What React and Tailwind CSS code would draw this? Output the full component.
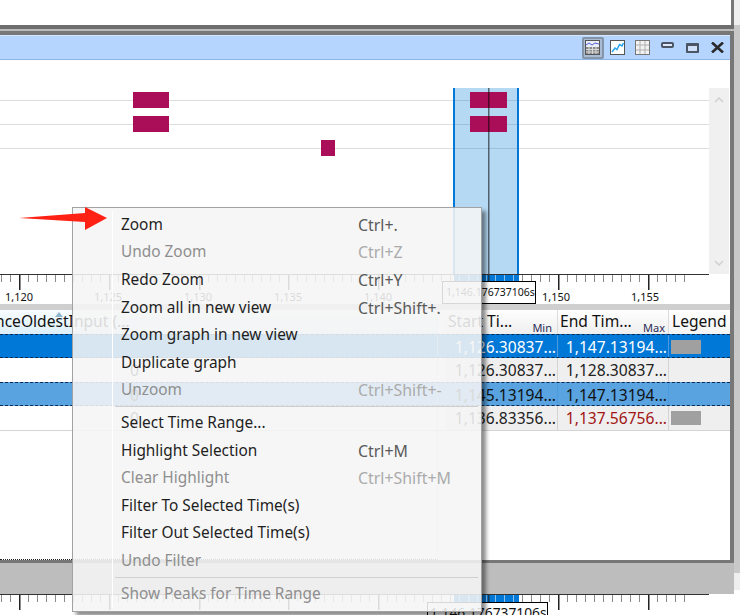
const FONT = { fontFamily: '"Noto Sans", "Open Sans", sans-serif' };

const menuItems = [
  { label: 'Zoom', keys: 'Ctrl+.' },
  { label: 'Undo Zoom', keys: 'Ctrl+Z', off: true },
  { label: 'Redo Zoom', keys: 'Ctrl+Y' },
  { label: 'Zoom all in new view', keys: 'Ctrl+Shift+.' },
  { label: 'Zoom graph in new view' },
  { label: 'Duplicate graph' },
  { label: 'Unzoom', keys: 'Ctrl+Shift+-', off: true },
  { sep: true },
  { label: 'Select Time Range...' },
  { label: 'Highlight Selection', keys: 'Ctrl+M' },
  { label: 'Clear Highlight', keys: 'Ctrl+Shift+M', off: true },
  { label: 'Filter To Selected Time(s)' },
  { label: 'Filter Out Selected Time(s)' },
  { label: 'Undo Filter', off: true },
  { sep: true },
  { label: 'Show Peaks for Time Range', off: true },
];

const rows = [
  { start: '1,126.30837...', end: '1,147.13194...', zero: '', legend: true, kind: 'selected' },
  { start: '1,126.30837...', end: '1,128.30837...', zero: '0', kind: 'plain' },
  { start: '1,145.13194...', end: '1,147.13194...', zero: '0', kind: 'focus' },
  { start: '1,136.83356...', end: '1,137.56756...', zero: '0', legend: true, kind: 'plain', red: true },
];

const ticks = Array.from({ length: 77 }, (_, i) => i);
const labels = [
  ['1,120', 19],
  ['1,125', 108],
  ['1,130', 198],
  ['1,135', 288],
  ['1,140', 378],
  ['1,150', 556],
  ['1,155', 645],
];

function Ruler({ showLabels, height }) {
  return (
    <svg width="730" height={height} className="block">
      <rect x="0" y="0" width="709" height="1" fill="#333" />
      <rect x="454" y="1" width="65" height="7" fill="#0078d7" />
      {ticks.map((i) => {
        const x = Math.round(19 + (i - 2) * 8.98);
        const major = (i - 2) % 10 === 0;
        const inSel = x > 454 && x < 519;
        if (x < 0 || x > 708) return null;
        return (
          <rect
            key={i}
            x={x}
            y="1"
            width={major ? 1.5 : 1}
            height={major && !inSel ? 15 : 7}
            fill={inSel ? '#8fc3ec' : major ? '#222' : '#8a8a8a'}
          />
        );
      })}
      <rect x="488" y="1" width="1.5" height="7" fill="#1c3a52" />
      {showLabels &&
        labels.map(([text, x]) => (
          <text key={text} x={x} y="27" textAnchor="middle" fontSize="11" fill="#111" style={FONT}>
            {text}
          </text>
        ))}
    </svg>
  );
}

function Plot() {
  return (
    <svg width="730" height="214" className="block">
      {[40, 64, 88].map((y) => (
        <rect key={y} x="0" y={y} width="709" height="1" fill="#dddddd" />
      ))}
      <rect x="133" y="32" width="36" height="16" fill="#ab0e58" />
      <rect x="133" y="56" width="36" height="16" fill="#ab0e58" />
      <rect x="321" y="80" width="14" height="16" fill="#ab0e58" />
      <rect x="453" y="28" width="66" height="186" fill="#0078d7" fillOpacity="0.29" />
      <rect x="470" y="32" width="37" height="16" fill="#ab0e58" />
      <rect x="470" y="56" width="37" height="16" fill="#ab0e58" />
      <rect x="453" y="28" width="2" height="186" fill="#0078d7" />
      <rect x="517" y="28" width="2" height="186" fill="#0078d7" />
      <rect x="488" y="28" width="1.5" height="186" fill="#000" fillOpacity="0.55" />
      <rect x="709" y="28" width="20" height="186" fill="#f0f0f0" />
      <path d="M715 103l4-4 4 4" transform="translate(0 -61)" fill="none" stroke="#d0d0d0" strokeWidth="1.5" />
      <path d="M715 199l4 4 4-4" transform="translate(0 2)" fill="none" stroke="#d0d0d0" strokeWidth="1.5" />
    </svg>
  );
}

function ChartTableIcon() {
  return (
    <svg width="15" height="15" viewBox="0 0 15 15">
      <rect x="0.5" y="0.5" width="14" height="14" fill="#e8eef8" stroke="#555" />
      <path d="M1 5l3-2 3 2 3-2 4 1" fill="none" stroke="#5a5ad0" />
      <rect x="1" y="7" width="13" height="7" fill="#8a8a8a" />
      <path d="M1 9.5h13M1 12h13M4 7v7M7.5 7v7M11 7v7" stroke="#d8d8d8" />
    </svg>
  );
}

function LineIcon() {
  return (
    <svg width="15" height="15" viewBox="0 0 15 15">
      <rect x="0.5" y="0.5" width="14" height="14" fill="#fff" stroke="#555" />
      <path d="M2 12l3-4 2 1.5 2.5-5L12 6l1.5-3" fill="none" stroke="#27a4ec" strokeWidth="1.5" />
    </svg>
  );
}

function GridIcon() {
  return (
    <svg width="15" height="15" viewBox="0 0 15 15">
      <rect x="0.5" y="0.5" width="14" height="14" fill="#f2f2f2" stroke="#777" />
      <path d="M1 5h13M1 10h13M5 1v13M10 1v13" stroke="#b0b0b0" />
    </svg>
  );
}

function TitleBar() {
  return (
    <div className="h-[25px] flex justify-end items-center bg-[#b5d5ff] border-t border-[#d5e6fd] border-b border-b-[#8fb4e6]">
      <div className="w-[25px] flex justify-center">
        <div className="w-[22px] h-[22px] flex items-center justify-center bg-[#a9bcd6] border-2 border-[#8595a8] rounded-[2px]">
          <ChartTableIcon />
        </div>
      </div>
      <div className="w-[25px] flex justify-center">
        <LineIcon />
      </div>
      <div className="w-[25px] flex justify-center">
        <GridIcon />
      </div>
      <div className="w-[25px] flex justify-center pb-[5px]">
        <div className="w-[13px] h-[6px] border-2 border-[#4b5563] rounded-[2px] bg-[#dbe8fb]" />
      </div>
      <div className="w-[25px] flex justify-center">
        <div className="w-[13px] h-[10px] border-2 border-t-[3px] border-[#4b5563] rounded-[1px] bg-[#cfe0f8]" />
      </div>
      <div className="w-[25px] flex justify-center">
        <svg width="13" height="11" viewBox="0 0 13 11">
          <path d="M1 0.5l11 10M12 0.5l-11 10" stroke="#2b2b2b" strokeWidth="2.6" />
        </svg>
      </div>
    </div>
  );
}

function TableRow({ row }) {
  const selected = row.kind === 'selected';
  const focus = row.kind === 'focus';
  const tone = selected ? 'bg-[#0078d7] text-white' : focus ? 'bg-[#58a3e0] text-[#111]' : 'text-[#222]';
  const side = selected || focus ? '' : 'bg-[#efefef]';
  const divider = selected || focus ? 'border-[#4a9be0]' : 'border-[#d4d4d4]';
  return (
    <div
      className={`h-[24px] flex items-center text-[15.6px] leading-[24px] ${tone} ${
        selected || focus ? 'border-y border-dashed border-[#0b2a52]' : ''
      }`}
    >
      <div className="w-[438px] h-full border-r border-dotted border-[#c8c8c8] pl-[130px]">{row.zero}</div>
      <div className="w-[7px] h-full" />
      <div className={`w-[113px] h-full border-r text-right pr-[1px] whitespace-nowrap ${side} ${divider}`}>{row.start}</div>
      <div className={`w-[111px] h-full border-r text-right pr-[1px] whitespace-nowrap ${side} ${divider}`}>
        <span className={row.red ? 'text-[#a31515]' : ''}>{row.end}</span>
      </div>
      <div className={`flex-1 h-full pl-[2px] pt-[5px] ${side}`}>
        {row.legend && <div className="w-[30px] h-[14px] bg-[#a0a0a0]" />}
      </div>
    </div>
  );
}

function Table() {
  return (
    <div className="h-[250px] flex flex-col bg-white">
      <div className="h-[24px] flex items-stretch text-[15.6px] leading-[22px] text-[#111]">
        <div className="relative w-[438px] overflow-hidden whitespace-nowrap bg-gradient-to-b from-[#f8fcff] to-[#dcefFA] border-r border-dotted border-[#c8c8c8]">
          <span className="block -ml-[5px]">nceOldestInput (...</span>
          <div className="absolute left-[55px] top-[2px] w-0 h-0 border-x-[4px] border-x-transparent border-b-[5px] border-b-[#8fb4cc]" />
        </div>
        <div className="w-[7px]" />
        <div className="relative w-[113px] bg-gradient-to-b from-white to-[#eeeeee] border-r border-[#dddddd] pl-[3px]">
          Start Ti...
          <span className="absolute right-[5px] bottom-[-1px] text-[11px] leading-[14px] text-[#2b2b55]">Min</span>
        </div>
        <div className="relative w-[111px] bg-gradient-to-b from-white to-[#eeeeee] border-r border-[#dddddd] pl-[2px]">
          End Tim...
          <span className="absolute right-[3px] bottom-[-1px] text-[11px] leading-[14px] text-[#2b2b55]">Max</span>
        </div>
        <div className="flex-1 pl-[3px] bg-gradient-to-b from-white to-[#f4f4f4]">Legend</div>
      </div>
      {rows.map((row, i) => (
        <TableRow key={i} row={row} />
      ))}
      <div className="flex-1 flex border-t border-[#d4d4d4]">
        <div className="w-[438px] h-[129px] border-r border-dotted border-[#c8c8c8] border-b border-b-[#222]" style={{ borderBottomStyle: 'dotted' }} />
      </div>
    </div>
  );
}

function ContextMenu() {
  return (
    <div className="absolute left-[72px] top-[207px] w-[410px] h-[405px] pt-[3px] bg-[rgba(245,245,245,0.88)] border border-[#a2a2a2] shadow-[4px_4px_4px_rgba(0,0,0,0.45)] text-[15.4px] leading-[20px]">
      <div className="absolute left-[39px] top-[3px] bottom-[3px] w-px bg-white" />
      {menuItems.map((item, i) =>
        item.sep ? (
          <div key={i} className="h-[5px] pl-[42px] pr-[3px] flex items-start">
            <div className="w-full h-px mt-[2px] bg-[#cfcfcf]" />
          </div>
        ) : (
          <div key={i} className={`h-[27.6px] flex items-center pl-[48px] ${item.off ? 'text-[#8e8e8e]' : 'text-[#1e1e1e]'}`}>
            <span className="w-[237px] whitespace-nowrap">{item.label}</span>
            {item.keys && (
              <span className={`text-[15.9px] ${item.off ? 'text-[#ababab]' : 'text-[#5a5a5a]'}`}>{item.keys}</span>
            )}
          </div>
        ),
      )}
    </div>
  );
}

function TimeTag({ className, children }) {
  return (
    <div className={`absolute bg-white border border-black whitespace-nowrap text-[#111] ${className}`}>{children}</div>
  );
}

export default function App() {
  return (
    <div className="relative w-[740px] h-[615px] overflow-hidden bg-white flex flex-col" style={FONT}>
      <div className="h-[25px] flex shrink-0">
        <div className="w-[731px] bg-white" />
        <div className="w-[3px] bg-[#777777]" />
        <div className="flex-1 bg-[#efefef]" />
      </div>

      <div className="flex-1 flex">
        <div className="w-[734px] flex flex-col">
          <div className="h-[4px] bg-[#6e6e6e]" />
          <div className="h-[2px] bg-[#bcbcbc]" />
          <div className="h-[4px] bg-[#777777]" />
          <div className="flex h-[525px]">
            <div className="w-[730px] flex flex-col bg-white">
              <TitleBar />
              <Plot />
              <div className="h-[30px]">
                <Ruler showLabels height={30} />
              </div>
              <div className="h-[6px] bg-[#cfcfcf]" />
              <Table />
            </div>
            <div className="flex-1 bg-[#777777]" />
          </div>
          <div className="h-[3px] bg-[#777777]" />
          <div className="h-[31px] bg-[#bdbdbd]" />
          <Ruler height={21} />
        </div>
        <div className="flex-1 flex flex-col">
          <div className="h-[548px] bg-[#c8c8c8]" />
          <div className="h-[17px] bg-[#eeeeee]" />
        </div>
      </div>

      <TimeTag className="left-[442px] top-[281px] w-[94px] h-[23px] text-[10.5px] leading-[21px] pl-[3px]">1,146.176737106s</TimeTag>
      <TimeTag className="left-[427px] top-[602px] w-[121px] h-[24px] text-[13.8px] leading-[20px] pl-[2px]">1,146.176737106s</TimeTag>

      <ContextMenu />

      <svg width="90" height="24" viewBox="0 0 90 24" className="absolute left-[18px] top-[207px]">
        <polygon points="1,11 67,6 67,0 89,11 67,23 67,15" fill="#ff2214" />
      </svg>
    </div>
  );
}
